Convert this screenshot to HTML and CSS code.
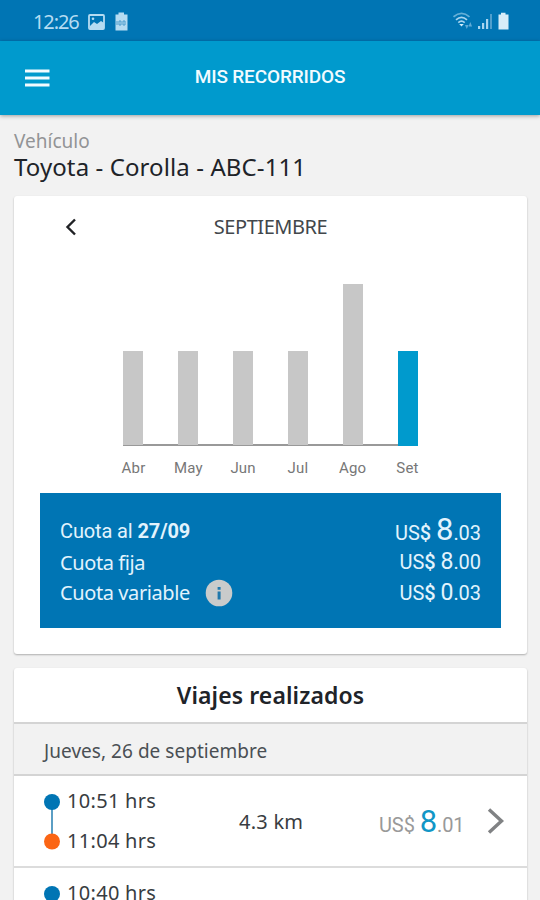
FILE: index.html
```
<!DOCTYPE html>
<html lang="es">
<head>
<meta charset="utf-8">
<title>Mis recorridos</title>
<link rel="stylesheet" href="styles.css">
</head>
<body>
<div class="statusbar">
  <span class="clock">12:26</span>
  <svg class="ic-photo" width="17" height="16" viewBox="0 0 17 16"><rect x="1" y="1" width="15" height="14" rx="1" fill="none" stroke="#b5dcf2" stroke-width="1.8"/><path d="M2 12 L6 8 L9 10 L13 7 L16 9 V15 H2 Z" fill="#b5dcf2"/><circle cx="5" cy="4.800" r="1.300" fill="#b5dcf2"/></svg>
  <svg class="ic-charge" width="13" height="19" viewBox="0 0 13 19"><path d="M3.500 2.500 V0.500 H9 V2.500 H12.500 V18.500 H0.500 V2.500 Z" fill="#b5dcf2"/><path d="M2 9 V13 M4 9 h2 v4 h-2 z M8 9 h2 v4 h-2 z" fill="none" stroke="#4a9ccc" stroke-width="1"/></svg>
  <svg class="ic-net" width="58" height="19" viewBox="0 0 58 19">
    <g fill="none" stroke="#a9d5ef" stroke-width="1.700"><path d="M0.500 4.800 Q8.500 -2 16.500 4.800" opacity=".6"/><path d="M3 7.800 Q8.500 3 14 7.800"/><path d="M5.300 10.600 Q8.500 7.800 11.700 10.600"/></g>
    <path d="M6.200 12 H10.800 L8.500 14.500 Z" fill="#d4effc"/>
    <path d="M12 13 l1.800 4 l1.800 -4 z M15.500 14.500 l1.800 -4.500 l1.800 4.500 z" fill="#5fabd6"/>
    <path d="M25 14 h2.200 v3 h-2.200 z M29 11 h2.200 v6 h-2.200 z M33 7 h2.200 v10 h-2.200 z" fill="#a9d5ef"/><path d="M37 2 h2 v15 h-2 z" fill="#4f9fcd"/>
    <path d="M48 2.500 V0.800 H52.500 V2.500 H55.500 V17.500 H45.500 V2.500 Z" fill="#d8edf8"/>
  </svg>
</div>
<header class="appbar">
  <svg class="menu" width="25" height="20" viewBox="0 0 25 20"><path d="M0 3 H24.500 M0 10 H24.500 M0 17 H24.500" stroke="#f2fbff" stroke-width="3.200"/></svg>
  <h1 class="appbar-title">MIS RECORRIDOS</h1>
</header>
<main>
  <div class="vehicle">
    <div class="vehicle-label">Vehículo</div>
    <div class="vehicle-name">Toyota - Corolla - ABC-111</div>
  </div>
  <section class="card summary">
    <div class="month">
      <svg class="prev" width="12" height="18" viewBox="0 0 12 18"><path d="M10 1.500 L2.500 9 L10 16.500" fill="none" stroke="#202225" stroke-width="2.400"/></svg>
      <span class="month-name">SEPTIEMBRE</span>
    </div>
    <div class="chart">
      <div class="bar"></div><div class="bar"></div><div class="bar"></div><div class="bar"></div><div class="bar tall"></div><div class="bar current"></div>
    </div>
    <div class="months"><span>Abr</span><span>May</span><span>Jun</span><span>Jul</span><span>Ago</span><span>Set</span></div>
    <div class="fees">
      <div class="fee total"><span class="fee-name f1">Cuota al <b>27/09</b></span><span class="amount">US<b>$</b> <i>8</i>.03</span></div>
      <div class="fee"><span class="fee-name">Cuota fija</span><span class="amount">US<b>$</b> <i>8</i>.00</span></div>
      <div class="fee"><span class="fee-name">Cuota variable</span>
        <svg class="info" width="28" height="28" viewBox="0 0 28 28"><circle cx="14" cy="14" r="13.300" fill="#c9cbcb"/><path d="M12.600 8 h3 v2.700 h-3 z M12.600 12.500 h3 v8 h-3 z" fill="#2078ac"/></svg>
        <span class="amount">US<b>$</b> <i>0</i>.03</span></div>
    </div>
  </section>
  <section class="card trips">
    <h2>Viajes realizados</h2>
    <div class="day">Jueves, 26 de septiembre</div>
    <div class="trip">
      <svg class="route" width="18" height="58" viewBox="0 0 18 58"><path d="M9 9 V49" stroke="#3f8dba" stroke-width="1.700"/><circle cx="9" cy="9" r="8" fill="#0075b4"/><circle cx="9" cy="48.500" r="8" fill="#fb6514"/></svg>
      <div class="times"><span>10:51 hrs</span><span>11:04 hrs</span></div>
      <span class="km">4.3 km</span>
      <span class="price">US$ <i>8</i>.01</span>
      <svg class="next" width="18" height="28" viewBox="0 0 18 28"><path d="M2 2.500 L14.500 14 L2 25.500" fill="none" stroke="#808284" stroke-width="3.400"/></svg>
    </div>
    <div class="trip">
      <svg class="route" width="18" height="58" viewBox="0 0 18 58"><path d="M9 9 V49" stroke="#3f8dba" stroke-width="1.700"/><circle cx="9" cy="9" r="8" fill="#0075b4"/></svg>
      <div class="times"><span>10:40 hrs</span></div>
    </div>
  </section>
</main>
</body>
</html>
```
FILE: styles.css
```
* { box-sizing: border-box; }
html { overflow: hidden; }
body { margin: 0; height: 900px; overflow: hidden; background: #f2f2f2; font-family: "Noto Sans", sans-serif; color: #202328; white-space: nowrap; }
h1, h2 { margin: 0; }
i { font-style: normal; }
svg { display: block; flex: none; }

.statusbar { height: 41px; background: #0075b4; display: flex; align-items: center; padding: 2px 29px 0 33px; }
.clock { width: 55px; font: 20px "Noto Sans", sans-serif; letter-spacing: -1.1px; color: #b5dcf2; }
.ic-charge { margin-left: 10px; }
.ic-net { margin-left: auto; }

.appbar { height: 74px; background: #009acd; display: grid; grid-template-columns: 50px 1fr 50px; align-items: center; padding: 0 25px; box-shadow: 0 1px 4px rgba(0, 0, 0, .35); position: relative; }
.appbar-title { text-align: center; font: 500 19px/24px Roboto, sans-serif; color: #f2fbff; letter-spacing: -.15px; padding-bottom: 2px; }

.vehicle { height: 81px; padding: 14px 14px 0; }
.vehicle-label { font-size: 19px; line-height: 25px; color: #929496; }
.vehicle-name { font-size: 24px; line-height: 26px; letter-spacing: .1px; }

.card { margin: 0 13px 0 14px; background: #fff; border-radius: 3px; box-shadow: 0 1px 2px rgba(0, 0, 0, .28); }
.summary { height: 458px; padding: 0 26px; }
.month { height: 88px; display: grid; grid-template-columns: 62px 1fr 62px; padding-top: 16px; }
.prev { margin: 6px 0 0 25px; }
.month-name { text-align: center; font-size: 20px; line-height: 30px; color: #42474b; letter-spacing: -.45px; }
.chart { height: 162px; margin: 0 83px 0 83px; border-bottom: 2px solid #999; display: flex; align-items: flex-end; justify-content: space-between; }
.bar { width: 20px; height: 94px; background: #c7c7c7; margin-bottom: -1px; }
.bar.tall { height: 161px; }
.bar.current { background: #009acd; margin-bottom: -2px; height: 95px; }
.months { display: grid; grid-template-columns: repeat(6, 54.8px); justify-content: center; margin-top: 11px; font: 15px/22px Roboto, sans-serif; letter-spacing: .2px; color: #777; text-align: center; }
.fees { height: 135px; margin-top: 14px; background: #0075b4; padding: 22px 20px 0; color: #e2f3fd; }
.fee { display: flex; align-items: center; height: 30.5px; font-size: 20px; line-height: 31px; }
.fee.total { height: 32px; }
.fee-name { letter-spacing: -.4px; }
.f1 { font-family: Roboto, sans-serif; letter-spacing: -.12px; }
.f1 b { font-weight: 700; }
.info { margin-left: 15px; }
.amount { margin-left: auto; font: 20px/31px Roboto, sans-serif; letter-spacing: -.05px; }
.amount b { font-weight: 500; }
.amount i { font-size: 23px; }
.total .amount i { font-size: 31px; }

.trips { margin-top: 14px; height: 232px; overflow: hidden; border-radius: 3px 3px 0 0; }
.trips h2 { height: 56px; border-bottom: 2px solid #d4d4d4; text-align: center; font-size: 23px; line-height: 54px; font-weight: 600; letter-spacing: .1px; }
.day { height: 52px; border-bottom: 2px solid #d4d4d4; background: #f2f2f2; padding-left: 30px; font-size: 19px; line-height: 54px; color: #4a4f54; letter-spacing: .04px; }
.trip { height: 92px; border-bottom: 2px solid #dcdcdc; display: flex; align-items: flex-start; font-size: 20px; color: #383c41; }
.route { margin: 16.5px 0 0 29px; }
.times { width: 172px; margin-left: 6px; padding-top: 5px; display: flex; flex-direction: column; line-height: 40px; letter-spacing: .3px; }
.km { width: 140px; line-height: 92px; letter-spacing: .25px; }
.price { width: 108px; font: 20px/92px Roboto, sans-serif; color: #999; letter-spacing: -.1px; }
.price i { font-size: 31px; color: #1296c6; }
.next { margin-top: 31px; }
```
